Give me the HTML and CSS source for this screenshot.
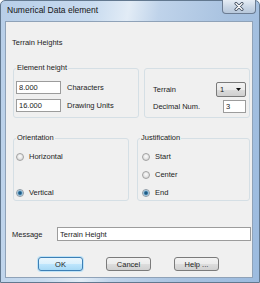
FILE: index.html
```html
<!DOCTYPE html>
<html>
<head>
    <title>Numerical Data element</title>
    <link rel="stylesheet" href="styles.css">
</head>
<body>
    <div class="window">
        <div class="titlebar">
            <span class="title">Numerical Data element</span>
            <div class="close">
                <svg width="10" height="9" viewBox="0 0 10 9">
                    <path d="M2 1.5 L8 7.5 M8 1.5 L2 7.5" stroke="#3d4a5c" stroke-width="3" stroke-linecap="round"/>
                    <path d="M2 1.5 L8 7.5 M8 1.5 L2 7.5" stroke="#ffffff" stroke-width="1.4" stroke-linecap="round"/>
                </svg>
            </div>
        </div>
        <div class="client">
            <div class="heading">Terrain Heights</div>
            <div class="row top-row">
                <fieldset class="group elem">
                    <legend>Element height</legend>
                    <div class="field first">
                        <input class="text num" type="text" value="8.000">
                        <span>Characters</span>
                    </div>
                    <div class="field">
                        <input class="text num" type="text" value="16.000">
                        <span>Drawing Units</span>
                    </div>
                </fieldset>
                <fieldset class="group terrain">
                    <div class="pair">
                        <span>Terrain</span>
                        <div class="combo">
                            <span>1</span>
                            <svg width="5" height="3" viewBox="0 0 5 3"><path d="M0 0 H5 L2.5 3 Z" fill="#111"/></svg>
                        </div>
                    </div>
                    <div class="pair">
                        <span>Decimal Num.</span>
                        <input class="text dec" type="text" value="3">
                    </div>
                </fieldset>
            </div>
            <div class="row mid-row">
                <fieldset class="group orient">
                    <legend>Orientation</legend>
                    <label class="opt"><input class="radio" type="radio" name="orient">Horizontal</label>
                    <label class="opt far"><input class="radio" type="radio" name="orient" checked>Vertical</label>
                </fieldset>
                <fieldset class="group just">
                    <legend>Justification</legend>
                    <label class="opt"><input class="radio" type="radio" name="just">Start</label>
                    <label class="opt near"><input class="radio" type="radio" name="just">Center</label>
                    <label class="opt near"><input class="radio" type="radio" name="just" checked>End</label>
                </fieldset>
            </div>
            <div class="message">
                <span class="msg-label">Message</span>
                <input class="text msg" type="text" value="Terrain Height">
            </div>
            <div class="buttons">
                <button class="button default">OK</button>
                <button class="button">Cancel</button>
                <button class="button">Help ...</button>
            </div>
        </div>
    </div>
</body>
</html>
```

FILE: styles.css
```css
body {
    margin: 0;
    width: 260px;
    height: 283px;
    overflow: hidden;
    font-family: "Liberation Sans", Arial, sans-serif;
    font-size: 7.5px;
    color: #1c1c1c;
    background: #ffffff;
}
.window {
    height: 283px;
    box-sizing: border-box;
    display: flex;
    flex-direction: column;
    border: 1px solid #62788f;
    border-radius: 5px 5px 0 0;
    background: linear-gradient(100deg, #b7cee8 0%, #c8dbef 30%, #e2ecf6 42%, #bfd3ea 52%, #a8c2e0 75%, #9cbbdf 100%);
}
.titlebar {
    height: 20px;
    display: flex;
    align-items: flex-start;
    padding-left: 6px;
}
.title {
    font-size: 8.5px;
    line-height: 19px;
    color: #151515;
}
.close {
    margin-left: auto;
    margin-right: 3px;
    margin-top: -1px;
    width: 34px;
    height: 14px;
    box-sizing: border-box;
    border: 1px solid #6c7d93;
    border-top: none;
    border-radius: 0 0 4px 4px;
    background: linear-gradient(#e6edf5, #c9d6e5 55%, #b7c8dc);
    display: flex;
    justify-content: center;
    align-items: center;
}
.client {
    flex: 1;
    margin: 0 6px 4px 4px;
    background: #f0f0f0;
    border: 1px solid #8fa2b8;
    display: flex;
    flex-direction: column;
}
.heading {
    margin-top: 16px;
    padding-left: 6px;
    line-height: 10px;
}
.row {
    display: flex;
    align-items: flex-start;
    margin-left: 7px;
}
.top-row {
    margin-top: 15px;
    gap: 5px;
}
.mid-row {
    margin-top: 15px;
    gap: 8px;
}
.group {
    margin: 0;
    padding: 0;
    box-sizing: border-box;
    border: 1px solid #d5dfe5;
    border-radius: 3px;
    min-width: 0;
}
.group legend {
    margin-left: 2px;
    padding: 0 1px;
    line-height: 10px;
}
.elem {
    width: 126px;
    height: 55px;
}
.field {
    display: flex;
    align-items: center;
    gap: 6px;
    margin-left: 2px;
    margin-top: 5px;
}
.field.first {
    margin-top: 8px;
}
.text {
    box-sizing: border-box;
    height: 13px;
    border: 1px solid #9c9c9c;
    background: #ffffff;
    font-family: "Liberation Sans", Arial, sans-serif;
    font-size: 7.5px;
    color: #1c1c1c;
    padding: 0 2px;
    margin: 0;
    outline: none;
}
.num {
    width: 45px;
}
.terrain {
    width: 106px;
    height: 50px;
    margin-top: 5px;
    padding: 13px 3px 0 8px;
    display: flex;
    flex-direction: column;
    gap: 3px;
}
.pair {
    display: flex;
    align-items: center;
    justify-content: space-between;
}
.combo {
    box-sizing: border-box;
    width: 30px;
    height: 15px;
    border: 1px solid #7a7a7a;
    border-radius: 2px;
    background: linear-gradient(#f2f2f2 0%, #ebebeb 50%, #dcdcdc 51%, #cfcfcf 100%);
    display: flex;
    align-items: center;
    justify-content: space-between;
    padding: 0 4px 0 3px;
}
.dec {
    width: 23px;
}
.orient {
    width: 116px;
    height: 68px;
}
.just {
    width: 113px;
    height: 68px;
}
.opt {
    display: flex;
    align-items: center;
    gap: 5px;
    height: 11px;
    margin-top: 8px;
    margin-left: 2px;
}
.just .opt {
    margin-left: 4px;
}
.opt.far {
    margin-top: 25px;
}
.opt.near {
    margin-top: 7px;
}
.radio {
    appearance: none;
    -webkit-appearance: none;
    margin: 0;
    width: 8px;
    height: 8px;
    box-sizing: border-box;
    border: 1px solid #a2a2a2;
    border-radius: 50%;
    background: radial-gradient(circle at 50% 40%, #fbfbfb 0%, #e6e6e6 50%, #c9c9c9 100%);
}
.radio:checked {
    border-color: #8d9aa5;
    background: radial-gradient(circle, #15466a 0, #2a6c98 1.4px, #93bfdc 2.4px, #e3ecf2 3.2px);
}
.message {
    display: flex;
    align-items: center;
    margin-top: 26px;
    padding-left: 6px;
    margin-right: 1px;
}
.msg-label {
    width: 45px;
}
.msg {
    flex: 1;
    height: 14px;
}
.buttons {
    display: flex;
    gap: 23px;
    margin-top: 16px;
    padding-left: 32px;
}
.button {
    box-sizing: border-box;
    width: 45px;
    height: 14px;
    padding: 0;
    border: 1px solid #7b7b7b;
    border-radius: 3px;
    background: linear-gradient(#f3f3f3 0%, #ebebeb 50%, #dddddd 51%, #d0d0d0 100%);
    font-family: "Liberation Sans", Arial, sans-serif;
    font-size: 7.5px;
    color: #1c1c1c;
}
.button.default {
    border-color: #3d7fb5;
    background: linear-gradient(#eaf6fd 0%, #d9f0fc 50%, #bee6fd 51%, #a7d9f5 100%);
    box-shadow: 0 0 0 1px #bfe3f7;
}
```
